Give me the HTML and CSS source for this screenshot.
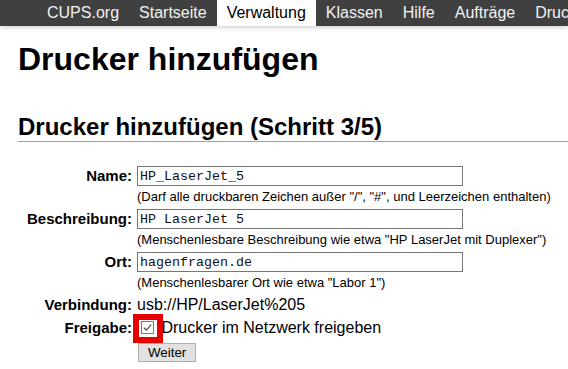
FILE: index.html
```html
<!DOCTYPE html>
<html lang="de">
<head>
<meta charset="utf-8">
<title>Drucker hinzufügen - CUPS</title>
<link rel="stylesheet" href="styles.css">
</head>
<body>
<nav class="nav">
  <a class="nav-item" href="#">CUPS.org</a>
  <a class="nav-item" href="#">Startseite</a>
  <a class="nav-item active" href="#">Verwaltung</a>
  <a class="nav-item" href="#">Klassen</a>
  <a class="nav-item" href="#">Hilfe</a>
  <a class="nav-item" href="#">Aufträge</a>
  <a class="nav-item" href="#">Drucker</a>
</nav>
<main class="main">
  <h1 class="title">Drucker hinzufügen</h1>
  <h2 class="subtitle">Drucker hinzufügen (Schritt 3/5)</h2>
  <form class="form">
    <div class="label label-input">Name:</div>
    <div class="value">
      <input class="field" type="text" value="HP_LaserJet_5">
      <div class="help">(Darf alle druckbaren Zeichen außer "/", "#", und Leerzeichen enthalten)</div>
    </div>

    <div class="label label-input">Beschreibung:</div>
    <div class="value">
      <input class="field" type="text" value="HP LaserJet 5">
      <div class="help">(Menschenlesbare Beschreibung wie etwa "HP LaserJet mit Duplexer")</div>
    </div>

    <div class="label label-input">Ort:</div>
    <div class="value">
      <input class="field" type="text" value="hagenfragen.de">
      <div class="help">(Menschenlesbarer Ort wie etwa "Labor 1")</div>
    </div>

    <div class="label label-text">Verbindung:</div>
    <div class="value value-text">usb://HP/LaserJet%205</div>

    <div class="label label-share">Freigabe:</div>
    <div class="value value-share"><span class="check"><svg width="13" height="13" viewBox="0 0 13 13"><rect x="0.5" y="0.5" width="12" height="12" fill="#fff" stroke="#7a7a7a"/><path d="M2.8 6.6 L5.3 9.1 L10.2 3.6" fill="none" stroke="#4a4a4a" stroke-width="1.2"/></svg><span class="highlight"></span></span> Drucker im Netzwerk freigeben</div>

    <div class="label"></div>
    <div class="value"><button class="btn" type="button">Weiter</button></div>
  </form>
</main>
</body>
</html>
```
FILE: styles.css
```css
html, body {
  margin: 0;
  padding: 0;
  background: #fff;
  overflow: hidden;
}
body {
  font-family: "Liberation Sans", Arial, sans-serif;
  color: #000;
}
.nav {
  height: 26px;
  background: #404040;
  padding-left: 37px;
  display: flex;
  white-space: nowrap;
  box-shadow: 0 1px 5px rgba(0, 0, 0, 0.22);
  position: relative;
}
.nav-item {
  display: block;
  padding: 0 10px;
  line-height: 26px;
  font-size: 16px;
  color: #f2f2f2;
  text-decoration: none;
  flex: none;
}
.nav-item.active {
  background: #fff;
  color: #000;
}
.main {
  padding-left: 18px;
}
.title {
  margin: 15px 0 0;
  font-size: 32px;
  font-weight: bold;
  line-height: normal;
}
.subtitle {
  margin: 35px 0 0;
  font-size: 24px;
  font-weight: bold;
  line-height: normal;
  border-bottom: 1px solid #a0a0a0;
}
.form {
  margin-top: 24px;
  display: grid;
  grid-template-columns: 114px 1fr;
  column-gap: 5px;
  align-items: start;
}
.label {
  text-align: right;
  font-weight: bold;
  font-size: 15px;
}
.label-input {
  line-height: 20px;
}
.label-text {
  line-height: 20px;
}
.label-share {
  line-height: 26px;
}
.field {
  display: block;
  box-sizing: border-box;
  width: 326px;
  height: 20px;
  margin: 0;
  padding: 1px 2px;
  border: 1px solid #767676;
  font-family: "Liberation Mono", "Courier New", monospace;
  font-size: 13.333px;
  color: #111;
  background: #fff;
}
.help {
  margin: 3px 0 5px;
  font-size: 13px;
  line-height: 15px;
}
.value-text {
  font-size: 16px;
  line-height: 20px;
}
.value-share {
  font-size: 16px;
  line-height: 26px;
}
.check {
  position: relative;
  display: inline-block;
  width: 13px;
  height: 13px;
  margin-left: 4px;
  margin-right: 3px;
  vertical-align: -1px;
}
.check svg {
  display: block;
}
.highlight {
  position: absolute;
  left: -8px;
  top: -7px;
  width: 30px;
  height: 29px;
  box-sizing: border-box;
  border: 6px solid #e60000;
}
.btn {
  margin: 2px 0 0 1px;
  height: 19px;
  padding: 0 9px;
  border: 1px solid #adadad;
  background: #e1e1e1;
  font-family: "Liberation Sans", Arial, sans-serif;
  font-size: 13.333px;
  color: #000;
  border-radius: 0;
}
```
